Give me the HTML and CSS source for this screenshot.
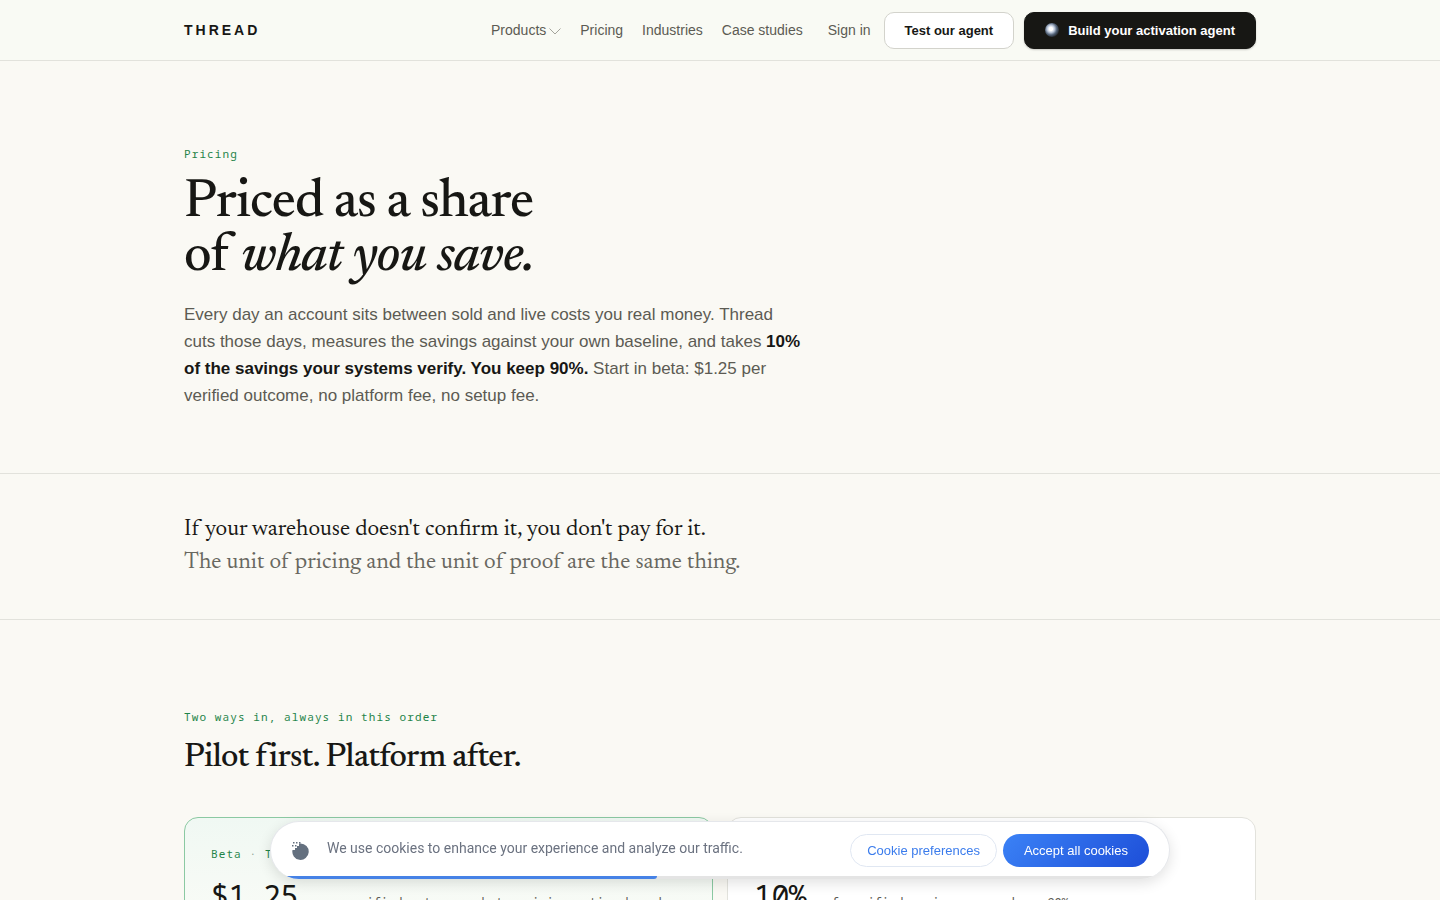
FILE: index.html
```html
<!DOCTYPE html>
<html lang="en">
<head>
<meta charset="utf-8">
<title>Thread – Pricing</title>
<meta name="viewport" content="width=device-width, initial-scale=1">
<link rel="stylesheet" href="styles.css">
</head>
<body>
<header class="site-header">
  <div class="wrap header-row">
    <a class="logo" href="#">THREAD</a>
    <nav class="nav">
      <button class="nav-link nav-menu" type="button">Products
        <svg class="chevron" width="12" height="8" viewBox="0 0 12 8" fill="none" stroke="currentColor" aria-hidden="true"><path d="M.5 1.500l5.500 5.500 5.500-5.500"/></svg>
      </button>
      <a class="nav-link" href="#">Pricing</a>
      <a class="nav-link" href="#">Industries</a>
      <a class="nav-link" href="#">Case studies</a>
    </nav>
    <a class="nav-link sign-in" href="#">Sign in</a>
    <div class="actions">
      <a class="btn btn-light" href="#">Test our agent</a>
      <a class="btn btn-dark" href="#"><span class="orb"></span>Build your activation agent</a>
    </div>
  </div>
</header>
<main>
  <section class="hero">
    <div class="wrap">
      <p class="eyebrow">Pricing</p>
      <h1 class="title">Priced as a share<br>of <em>what you save.</em></h1>
      <p class="lead">Every day an account sits between sold and live costs you real money. Thread cuts those days, measures the savings against your own baseline, and takes <strong>10% of the savings your systems verify. You keep 90%.</strong> Start in beta: $1.25 per verified outcome, no platform fee, no setup fee.</p>
    </div>
  </section>
  <section class="proof">
    <div class="wrap">
      <p class="statement">If your warehouse doesn't confirm it, you don't pay for it.<br><span class="muted">The unit of pricing and the unit of proof are the same thing.</span></p>
    </div>
  </section>
  <section class="plans">
    <div class="wrap">
      <p class="eyebrow">Two ways in, always in this order</p>
      <h2 class="subtitle">Pilot first. Platform after.</h2>
      <div class="cards">
        <article class="card card-beta">
          <p class="eyebrow">Beta <span class="dot">·</span> The pilot</p>
          <p class="price-row"><span class="price">$1.25</span><span class="unit">per verified outcome · beta pricing action-based</span></p>
        </article>
        <article class="card">
          <p class="eyebrow">Platform</p>
          <p class="price-row"><span class="price">10%</span><span class="unit">of verified savings · you keep 90%</span></p>
        </article>
      </div>
    </div>
  </section>
</main>
<aside class="cookie-bar" aria-label="Cookie consent">
  <svg class="cookie" width="18" height="18" viewBox="0 0 18 18" fill="#64707f" aria-hidden="true"><path d="M9.500 1.500a8.200 8.200 0 1 1-8 6.500h2.500V6h2V4h2V1.500z"/><path d="M2 0h1.500v1.500H2zM5 0h1.500v1.500H5zM8 0h1.500v1.500H8zM1 3h1.500v1.500H1zM4 3h1.500v1.500H4z"/></svg>
  <p class="cookie-text">We use cookies to enhance your experience and analyze our traffic.</p>
  <button class="pill" type="button">Cookie preferences</button>
  <button class="pill pill-primary" type="button">Accept all cookies</button>
  <span class="track"><span class="progress"></span></span>
</aside>
</body>
</html>
```
FILE: styles.css
```css
* { box-sizing: border-box; }
html { scrollbar-width: none; }
body {
  margin: 0;
  background: #faf9f4;
  color: #171714;
  font-family: "Liberation Sans", Arial, sans-serif;
}
h1, h2, p { margin: 0; }
a { color: inherit; text-decoration: none; }
button { font: inherit; cursor: pointer; }
.wrap { max-width: 1120px; margin: 0 auto; padding: 0 24px; }

.site-header { background: #f9faf4; border-bottom: 1px solid #e2e2dc; }
.header-row { display: flex; align-items: center; height: 60px; }
.logo { font-size: 14px; line-height: 20px; font-weight: 700; letter-spacing: 3px; margin-right: auto; }
.nav { display: flex; gap: 19px; }
.nav-link { font-size: 14px; line-height: 20px; color: #5c5b53; }
.nav-menu { display: flex; align-items: center; gap: 3px; padding: 0; border: 0; background: none; }
.chevron { color: #a5a49c; margin-top: 2px; }
.sign-in { margin: 0 13px 0 25px; }
.actions { display: flex; gap: 10px; }
.btn { display: flex; align-items: center; gap: 9px; height: 37px; padding: 0 20px; border: 1px solid #d3d3cc; border-radius: 10px; font-size: 13px; font-weight: 700; }
.btn-light { background: #fff; }
.btn-dark { background: #171714; color: #fff; border-color: #171714; box-shadow: 0 1px 2px #0003; }
.orb { width: 14px; height: 14px; border-radius: 50%; background: radial-gradient(circle at 42% 42%, #fff 0 15%, #b9c5d8 32%, #526277 52%, #272c34 72%, #171714 88%); }

.hero { padding: 84px 0 64px; border-bottom: 1px solid #e2e2dc; }
.eyebrow { font-family: "Noto Sans Mono", "DejaVu Sans Mono", monospace; font-size: 11px; line-height: 18px; letter-spacing: 0.1em; color: #1f8449; }
.title, .statement, .subtitle { font-family: Newsreader, "Liberation Serif", serif; }
.title { margin-top: 13px; font-size: 54px; line-height: 54px; font-weight: 500; letter-spacing: -1px; }
.lead { max-width: 620px; margin-top: 17px; font-size: 17px; line-height: 27px; color: #5c5b53; }
.lead strong { color: #171714; }
.proof { padding: 39px 0 40px; border-bottom: 1px solid #e2e2dc; }
.statement { font-size: 23px; line-height: 33px; }
.muted { color: #68675f; }
.plans { padding: 88px 0 64px; }
.subtitle { margin-top: 12px; font-size: 34px; line-height: 40px; font-weight: 500; letter-spacing: -0.02em; }
.cards { display: grid; grid-template-columns: repeat(2, minmax(0, 1fr)); gap: 14px; margin-top: 39px; }
.card { padding: 27px 26px; border: 1px solid #e2e2dc; border-radius: 14px; background: #fff; }
.card-beta { border-color: #8bc9a2; background: linear-gradient(#f0f8f3, #f8fbf6 90px); }
.dot { color: #91a497; }
.price-row { display: flex; align-items: baseline; gap: 18px; margin-top: 13px; white-space: nowrap; font-family: "Noto Sans Mono", "DejaVu Sans Mono", monospace; }
.price { font-size: 30px; line-height: 40px; letter-spacing: -0.02em; }
.unit { font-size: 12px; color: #5c5b53; }

.cookie-bar {
  position: fixed;
  left: 50%;
  bottom: 21px;
  transform: translateX(-50%);
  display: flex;
  align-items: center;
  width: calc(100% - 48px);
  max-width: 900px;
  height: 58px;
  padding: 0 20px;
  overflow: hidden;
  border: 1px solid #e5e7eb;
  border-bottom: 0;
  border-radius: 29px;
  background: #fff;
  box-shadow: 0 4px 14px #0000001f;
}
.cookie-text { margin: 0 auto 6px 18px; font-family: Roboto, sans-serif; font-size: 14px; line-height: 20px; color: #6b7280; }
.pill { height: 33px; padding: 0 16px; border: 1px solid #e0e7f2; border-radius: 17px; background: #fff; color: #3b7cec; font-size: 13px; }
.pill-primary { margin-left: 6px; padding: 0 21px; border: 0; background: linear-gradient(135deg, #3b82f6, #1d4ed8); color: #fff; }
.track { position: absolute; left: 0; right: 0; bottom: 0; height: 3px; background: #e4e4e4; }
.progress { display: block; width: 43%; height: 3px; border-radius: 0 0 3px 0; background: #4682e6; }
```
